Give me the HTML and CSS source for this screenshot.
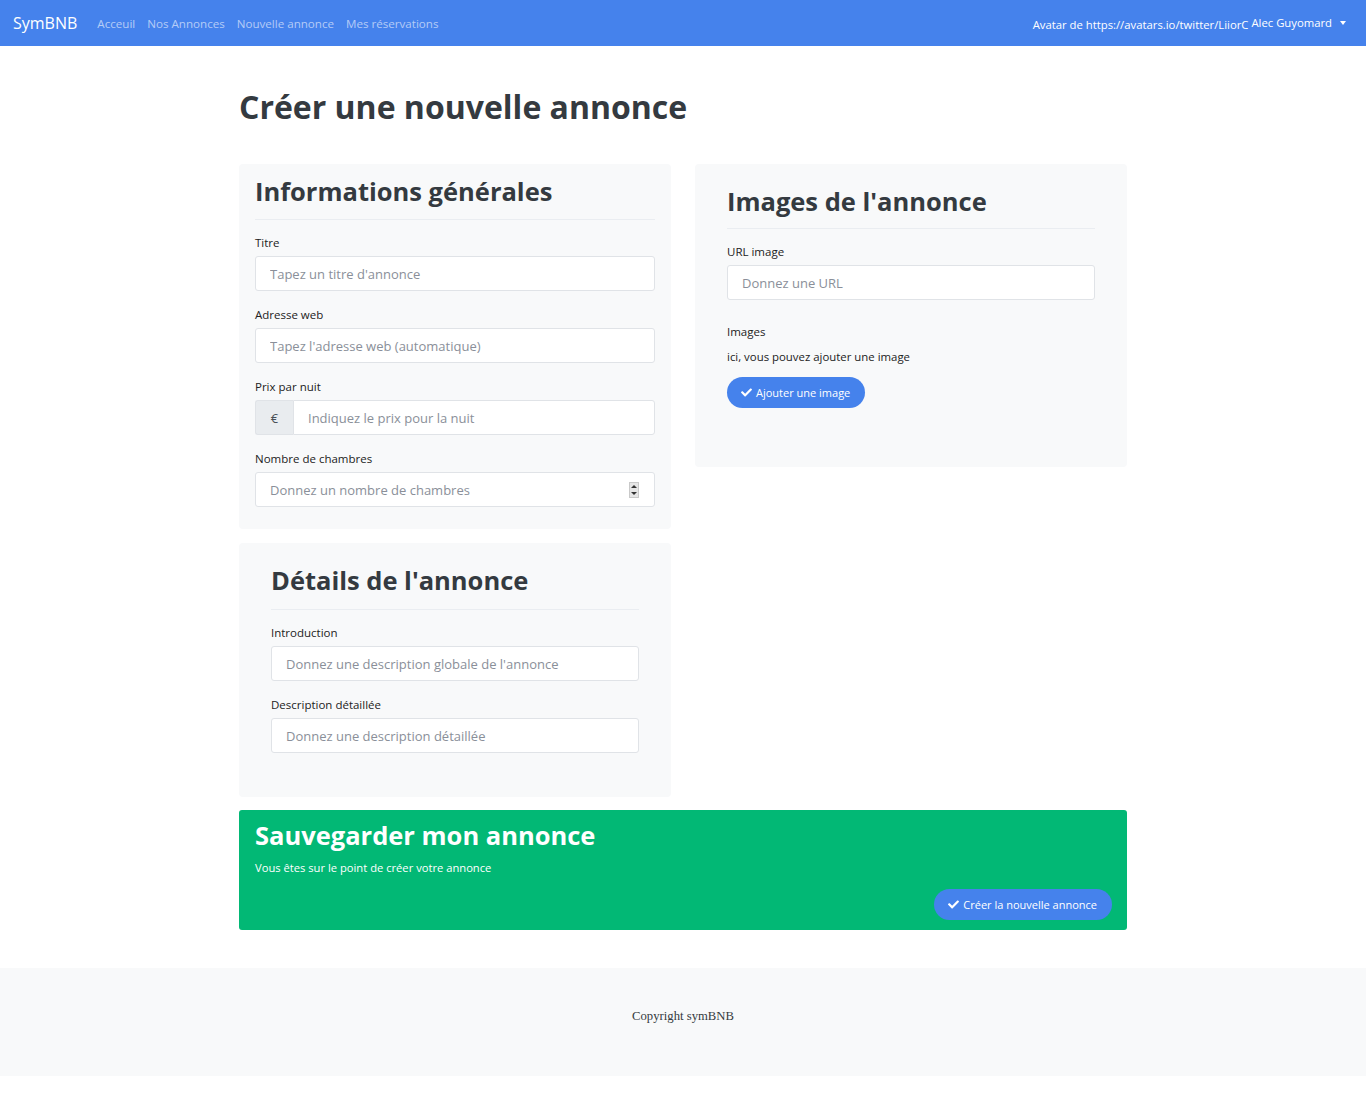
FILE: index.html
```html
<!DOCTYPE html>
<html lang="fr">
<head>
<meta charset="utf-8">
<title>SymBNB</title>
<link rel="stylesheet" href="styles.css">
</head>
<body>
<nav class="navbar">
  <a class="brand" href="#">SymBNB</a>
  <ul class="nav-links">
    <li><a href="#">Acceuil</a></li>
    <li><a href="#">Nos Annonces</a></li>
    <li><a href="#">Nouvelle annonce</a></li>
    <li><a href="#">Mes réservations</a></li>
  </ul>
  <div class="nav-user">
    <span class="avatar-alt">Avatar de https://avatars.io/twitter/LiiorC</span>
    <span class="user-name">Alec Guyomard</span>
    <span class="caret"></span>
  </div>
</nav>

<main class="container">
  <h1 class="page-title">Créer une nouvelle annonce</h1>

  <div class="row">
    <div class="col">
      <section class="card card-general">
        <h2 class="card-title">Informations générales</h2>
        <hr class="sep">
        <div class="form-group">
          <label>Titre</label>
          <input class="form-control" type="text" placeholder="Tapez un titre d'annonce">
        </div>
        <div class="form-group">
          <label>Adresse web</label>
          <input class="form-control" type="text" placeholder="Tapez l'adresse web (automatique)">
        </div>
        <div class="form-group">
          <label>Prix par nuit</label>
          <div class="input-group">
            <span class="addon">€</span>
            <input class="form-control grouped" type="text" placeholder="Indiquez le prix pour la nuit">
          </div>
        </div>
        <div class="form-group">
          <label>Nombre de chambres</label>
          <div class="number-wrap">
            <input class="form-control" type="text" placeholder="Donnez un nombre de chambres">
            <span class="spinner"><span class="up"></span><span class="down"></span></span>
          </div>
        </div>
      </section>

      <section class="card card-padded card-details">
        <h2 class="card-title">Détails de l'annonce</h2>
        <hr class="sep">
        <div class="form-group">
          <label>Introduction</label>
          <input class="form-control" type="text" placeholder="Donnez une description globale de l'annonce">
        </div>
        <div class="form-group">
          <label>Description détaillée</label>
          <input class="form-control" type="text" placeholder="Donnez une description détaillée">
        </div>
      </section>
    </div>

    <div class="col">
      <section class="card card-padded card-images">
        <h2 class="card-title">Images de l'annonce</h2>
        <hr class="sep">
        <div class="form-group">
          <label>URL image</label>
          <input class="form-control" type="text" placeholder="Donnez une URL">
        </div>
        <div class="images-block">
          <label>Images</label>
          <p class="help">ici, vous pouvez ajouter une image</p>
          <button class="btn" type="button">
            <svg class="check" viewBox="0 0 512 512"><path d="M173.9 439.4l-166.4-166.4c-10-10-10-26.2 0-36.2l36.2-36.2c10-10 26.2-10 36.2 0L192 312.7 432.1 72.6c10-10 26.2-10 36.2 0l36.2 36.2c10 10 10 26.2 0 36.2l-294.4 294.4c-10 10-26.2 10-36.2 0z"/></svg>Ajouter une image
          </button>
        </div>
      </section>
    </div>
  </div>

  <section class="save-card">
    <h2 class="save-title">Sauvegarder mon annonce</h2>
    <p class="save-text">Vous êtes sur le point de créer votre annonce</p>
    <div class="save-actions">
      <button class="btn" type="button">
        <svg class="check" viewBox="0 0 512 512"><path d="M173.9 439.4l-166.4-166.4c-10-10-10-26.2 0-36.2l36.2-36.2c10-10 26.2-10 36.2 0L192 312.7 432.1 72.6c10-10 26.2-10 36.2 0l36.2 36.2c10 10 10 26.2 0 36.2l-294.4 294.4c-10 10-26.2 10-36.2 0z"/></svg>Créer la nouvelle annonce
      </button>
    </div>
  </section>
</main>

<footer class="footer">
  <p>Copyright symBNB</p>
</footer>
</body>
</html>
```
FILE: styles.css
```css
* { box-sizing: border-box; }

body {
  margin: 0;
  font-family: "Open Sans", "Noto Sans", sans-serif;
  color: #343a40;
  background: #fff;
}

/* Navbar */
.navbar {
  height: 46px;
  background: #4582ec;
  display: flex;
  align-items: center;
  padding: 0 20px 0 13px;
}
.brand {
  color: #fff;
  text-decoration: none;
  font-size: 16px;
  margin-right: 14px;
}
.nav-links {
  list-style: none;
  margin: 0;
  padding: 0;
  display: flex;
}
.nav-links a {
  display: block;
  padding: 0 6px;
  font-size: 11.6px;
  color: rgba(255, 255, 255, 0.6);
  text-decoration: none;
}
.nav-user {
  margin-left: auto;
  display: flex;
  align-items: center;
  color: #fff;
  font-size: 11.3px;
}
.avatar-alt { margin-top: 3px; margin-right: 3px; }
.user-name { margin-top: -1px; }
.caret {
  margin-left: 8px;
  width: 0;
  height: 0;
  border-left: 3.5px solid transparent;
  border-right: 3.5px solid transparent;
  border-top: 4px solid #fff;
}

/* Layout */
.container {
  width: 888px;
  margin: 0 auto;
  padding-bottom: 38px;
}
.page-title {
  margin: 0;
  padding: 38px 0 34px;
  font-size: 32px;
  line-height: 46px;
  font-weight: 700;
  color: #343a40;
}
.row {
  display: flex;
  gap: 24px;
  align-items: flex-start;
}
.col {
  flex: 1;
  display: flex;
  flex-direction: column;
  gap: 14px;
}

/* Cards */
.card {
  background: #f8f9fa;
  border-radius: 4px;
}
.card-general { padding: 8px 16px 8px; }
.card-padded { padding: 18px 32px 30px; }
.card-images { padding-bottom: 59px; }
.card-title {
  margin: 0;
  font-size: 25.5px;
  line-height: 38px;
  font-weight: 700;
  color: #343a40;
}
.sep {
  border: 0;
  border-top: 1px solid #eaedf1;
  margin: 9px 0 13px;
}
.card-details .sep { margin-top: 10px; }
.card-images .sep { margin-top: 8px; }

.form-group { margin-bottom: 14px; }
label {
  display: block;
  font-size: 11.5px;
  line-height: 19px;
  margin-bottom: 4px;
  color: #222;
}
.form-control {
  display: block;
  width: 100%;
  height: 35px;
  padding: 0 14px;
  border: 1px solid #e0e3e7;
  border-radius: 3px;
  background: #fff;
  font-family: "Open Sans", "Noto Sans", sans-serif;
  font-size: 13px;
  color: #495057;
  outline: none;
}
.form-control::placeholder { color: #8a8f99; }

.input-group { display: flex; }
.addon {
  flex: 0 0 38px;
  height: 35px;
  display: flex;
  align-items: center;
  justify-content: center;
  background: #e9ecef;
  border: 1px solid #e0e3e7;
  border-right: 0;
  border-radius: 3px 0 0 3px;
  font-size: 13px;
  color: #495057;
}
.form-control.grouped {
  border-radius: 0 3px 3px 0;
}

.number-wrap { position: relative; }
.spinner {
  position: absolute;
  right: 16px;
  top: 10px;
  width: 10px;
  height: 16px;
  background: #e6e6e6;
  border: 1px solid #c9c9c9;
  display: flex;
  flex-direction: column;
  align-items: center;
  justify-content: space-around;
}
.spinner .up, .spinner .down {
  width: 0; height: 0;
  border-left: 3px solid transparent;
  border-right: 3px solid transparent;
}
.spinner .up { border-bottom: 3px solid #333; }
.spinner .down { border-top: 3px solid #333; }

.images-block { padding-top: 8px; }
.images-block label { margin-bottom: 6px; }
.help {
  margin: 0 0 11px;
  font-size: 11.4px;
  line-height: 19px;
  color: #222;
}

.btn {
  display: inline-flex;
  align-items: center;
  height: 31px;
  padding: 0 15px 0 14px;
  border: 0;
  border-radius: 16px;
  background: #4582ec;
  color: #fff;
  font-family: "Open Sans", "Noto Sans", sans-serif;
  font-size: 11px;
  cursor: pointer;
}
.check {
  width: 11px;
  height: 11px;
  fill: #fff;
  margin-right: 4px;
}

/* Save card */
.save-card {
  margin-top: 13px;
  background: #02b875;
  border-radius: 3px;
  padding: 6px 15px 10px 16px;
  color: #fff;
}
.save-title {
  margin: 0;
  font-size: 25.5px;
  line-height: 38px;
  font-weight: 700;
  color: #fff;
}
.save-text {
  margin: 5px 0 0;
  font-size: 11.2px;
  line-height: 18px;
}
.save-actions {
  display: flex;
  justify-content: flex-end;
  margin-top: 12px;
}

/* Footer */
.footer {
  background: #f8f9fa;
  height: 108px;
  margin-bottom: 28px;
  padding-bottom: 12px;
  display: flex;
  align-items: center;
  justify-content: center;
}
.footer p {
  margin: 0;
  font-family: "Liberation Serif", Georgia, serif;
  font-size: 12.7px;
  color: #343a40;
}
```
